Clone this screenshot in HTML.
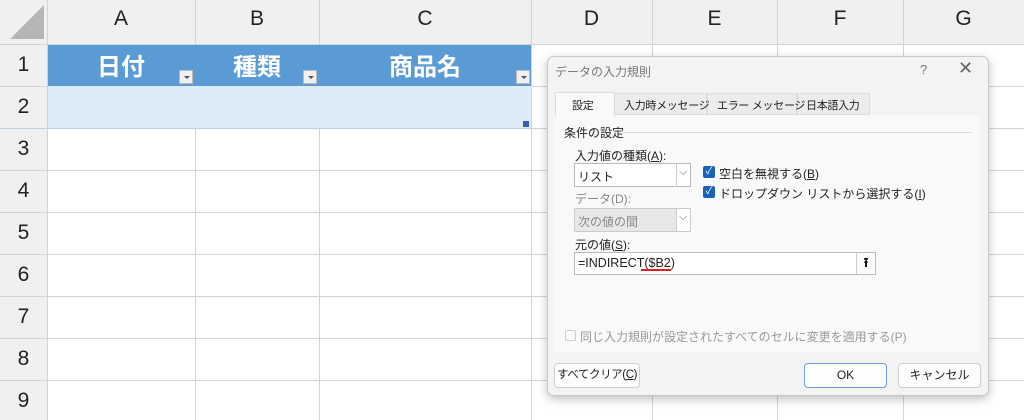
<!DOCTYPE html>
<html><head><meta charset="utf-8"><style>
*{box-sizing:border-box;margin:0;padding:0}
body{width:1024px;height:420px;overflow:hidden;background:#fff;font-family:"Liberation Sans","Noto Sans CJK JP",sans-serif;position:relative}
.a{position:absolute;white-space:nowrap}
.hl{position:absolute;left:0;width:1024px;height:1px;background:#d4d4d4}
.vl{position:absolute;top:0;height:420px;width:1px;background:#d4d4d4}
.ch{position:absolute;top:0;height:44px;font-size:21px;color:#222;text-align:center;line-height:38px}
.rh{position:absolute;left:0;width:47px;font-size:21px;color:#222;text-align:center}
.dd{position:absolute;width:14px;height:14px;background:#f0f0f0;border:1px solid #bbb}
.dd:after{content:"";position:absolute;left:4px;top:5px;border-left:3px solid transparent;border-right:3px solid transparent;border-top:3px solid #555}
.d{font-size:12px;color:#222}
.btn{position:absolute;white-space:nowrap;height:25px;background:#fdfdfd;border:1px solid #d0d0d0;border-radius:4px;font-size:12px;text-align:center;line-height:23px;color:#222}
.cb{position:absolute;width:12px;height:12px;background:#1a62b8;border-radius:2px;color:#fff;font-size:10px;line-height:12px;text-align:center}
.tab{font-size:11px;letter-spacing:-0.3px}
</style></head><body>
<div class="a" style="left:0;top:0;width:1024px;height:44px;background:#f0f0f0"></div>
<div class="a" style="left:0;top:0;width:47px;height:420px;background:#f0f0f0"></div>
<div class="a" style="left:47px;top:44px;width:484px;height:42px;background:#5b9bd5"></div>
<div class="a" style="left:47px;top:86px;width:484px;height:42px;background:#ddebf7"></div>
<div class="hl" style="top:44px"></div>
<div class="hl" style="top:86px;left:531px;width:493px"></div>
<div class="hl" style="top:128px;background:#bcd3ec;width:531px"></div>
<div class="hl" style="top:128px;left:531px;width:493px"></div>
<div class="hl" style="top:170px"></div><div class="hl" style="top:212px"></div><div class="hl" style="top:254px"></div><div class="hl" style="top:296px"></div><div class="hl" style="top:338px"></div><div class="hl" style="top:380px"></div>
<div class="hl" style="top:86px;width:47px"></div>
<div class="vl" style="left:47px"></div>
<div class="vl" style="left:195px;top:0;height:44px"></div><div class="vl" style="left:195px;top:128px;height:292px"></div>
<div class="vl" style="left:319px;top:0;height:44px"></div><div class="vl" style="left:319px;top:128px;height:292px"></div>
<div class="vl" style="left:531px"></div><div class="vl" style="left:652px"></div><div class="vl" style="left:777px"></div><div class="vl" style="left:903px"></div>
<div class="a" style="left:10px;top:5px;width:0;height:0;border-left:34px solid transparent;border-bottom:34px solid #b5b5b5"></div>
<div class="ch" style="left:47px;width:148px">A</div><div class="ch" style="left:195px;width:124px">B</div><div class="ch" style="left:319px;width:212px">C</div><div class="ch" style="left:531px;width:121px">D</div><div class="ch" style="left:652px;width:125px">E</div><div class="ch" style="left:777px;width:126px">F</div><div class="ch" style="left:903px;width:121px">G</div>
<div class="rh" style="top:53px">1</div><div class="rh" style="top:95px">2</div><div class="rh" style="top:137px">3</div><div class="rh" style="top:179px">4</div><div class="rh" style="top:221px">5</div><div class="rh" style="top:263px">6</div><div class="rh" style="top:305px">7</div><div class="rh" style="top:347px">8</div><div class="rh" style="top:389px">9</div>
<div class="a" style="left:47px;top:47px;width:148px;text-align:center;color:#fff;font-size:24px;font-weight:bold">日付</div>
<div class="a" style="left:195px;top:47px;width:124px;text-align:center;color:#fff;font-size:24px;font-weight:bold">種類</div>
<div class="a" style="left:319px;top:47px;width:212px;text-align:center;color:#fff;font-size:24px;font-weight:bold">商品名</div>
<div class="dd" style="left:179px;top:70px"></div><div class="dd" style="left:303px;top:70px"></div><div class="dd" style="left:516px;top:70px"></div>
<div class="a" style="left:523px;top:121px;width:6px;height:6px;background:#3a5fb0"></div>

<div class="a" style="left:547px;top:56px;width:442px;height:340px;background:#f3f3f3;border:1px solid #c8c8c8;border-radius:7px;box-shadow:0 3px 10px rgba(0,0,0,.25)"></div>
<div class="a d" style="left:555px;top:63px;color:#777">データの入力規則</div>
<div class="a" style="left:920px;top:62px;color:#777;font-size:13px">?</div>
<div class="a" style="left:958px;top:58px;color:#666;font-size:18px">✕</div>
<div class="a" style="left:614px;top:93px;width:93px;height:22px;background:#ececec;border:1px solid #ddd"></div>
<div class="a" style="left:707px;top:93px;width:90px;height:22px;background:#ececec;border:1px solid #ddd"></div>
<div class="a" style="left:797px;top:93px;width:73px;height:22px;background:#ececec;border:1px solid #ddd"></div>
<div class="a" style="left:554px;top:115px;width:426px;height:237px;background:#f9f9f9"></div>
<div class="a" style="left:555px;top:92px;width:60px;height:25px;background:#f9f9f9;border:1px solid #ddd;border-bottom:none"></div>
<div class="a d tab" style="left:572px;top:97px">設定</div>
<div class="a d tab" style="left:624px;top:97px">入力時メッセージ</div>
<div class="a d tab" style="left:717px;top:97px">エラー メッセージ</div>
<div class="a d tab" style="left:806px;top:97px">日本語入力</div>
<div class="a d" style="left:564px;top:124px">条件の設定</div>
<div class="a" style="left:622px;top:132px;width:350px;height:1px;background:#ddd"></div>
<div class="a d" style="left:575px;top:147px">入力値の種類(<u>A</u>):</div>
<div class="a" style="left:574px;top:163px;width:117px;height:24px;background:#fff;border:1px solid #bbb"></div>
<div class="a" style="left:676px;top:163px;width:1px;height:24px;background:#ccc"></div>
<div class="a d" style="left:578px;top:168px">リスト</div><div class="a" style="left:679px;top:166px;font-size:11px;color:#666">⌵</div>
<div class="a d" style="left:575px;top:190px;color:#888">データ(D):</div>
<div class="a" style="left:574px;top:208px;width:117px;height:24px;background:#e8e8e8;border:1px solid #ccc"></div>
<div class="a" style="left:676px;top:208px;width:15px;height:24px;background:#fff;border:1px solid #ccc"></div>
<div class="a d" style="left:578px;top:213px;color:#888">次の値の間</div><div class="a" style="left:679px;top:211px;font-size:11px;color:#666">⌵</div>
<div class="cb" style="left:703px;top:166px">✓</div><div class="a d" style="left:719px;top:165px">空白を無視する(<u>B</u>)</div>
<div class="cb" style="left:703px;top:186px">✓</div><div class="a d" style="left:719px;top:185px">ドロップダウン リストから選択する(<u>I</u>)</div>
<div class="a d" style="left:575px;top:236px">元の値(<u>S</u>):</div>
<div class="a" style="left:574px;top:252px;width:302px;height:23px;background:#fff;border:1px solid #bbb"></div>
<div class="a" style="left:856px;top:253px;width:19px;height:21px;background:#fafafa;border-left:1px solid #ccc;font-size:13px;text-align:center;font-weight:bold;line-height:20px">⭱</div>
<div class="a" style="left:578px;top:256px;font-size:12.5px;color:#222">=INDIRECT($B2)</div>
<div class="a" style="left:641px;top:269px;width:30px;height:2px;background:#e02020"></div>
<div class="a" style="left:565px;top:330px;width:11px;height:11px;border:1px solid #ccc;border-radius:2px;background:#fafafa"></div>
<div class="a d" style="left:580px;top:328px;color:#999">同じ入力規則が設定されたすべてのセルに変更を適用する(P)</div>
<div class="btn" style="left:554px;top:363px;width:86px;font-size:11.5px;letter-spacing:-0.4px">すべてクリア(<u>C</u>)</div>
<div class="btn" style="left:804px;top:363px;width:83px;border-color:#6a9fd8">OK</div>
<div class="btn" style="left:898px;top:363px;width:83px">キャンセル</div>
</body></html>
